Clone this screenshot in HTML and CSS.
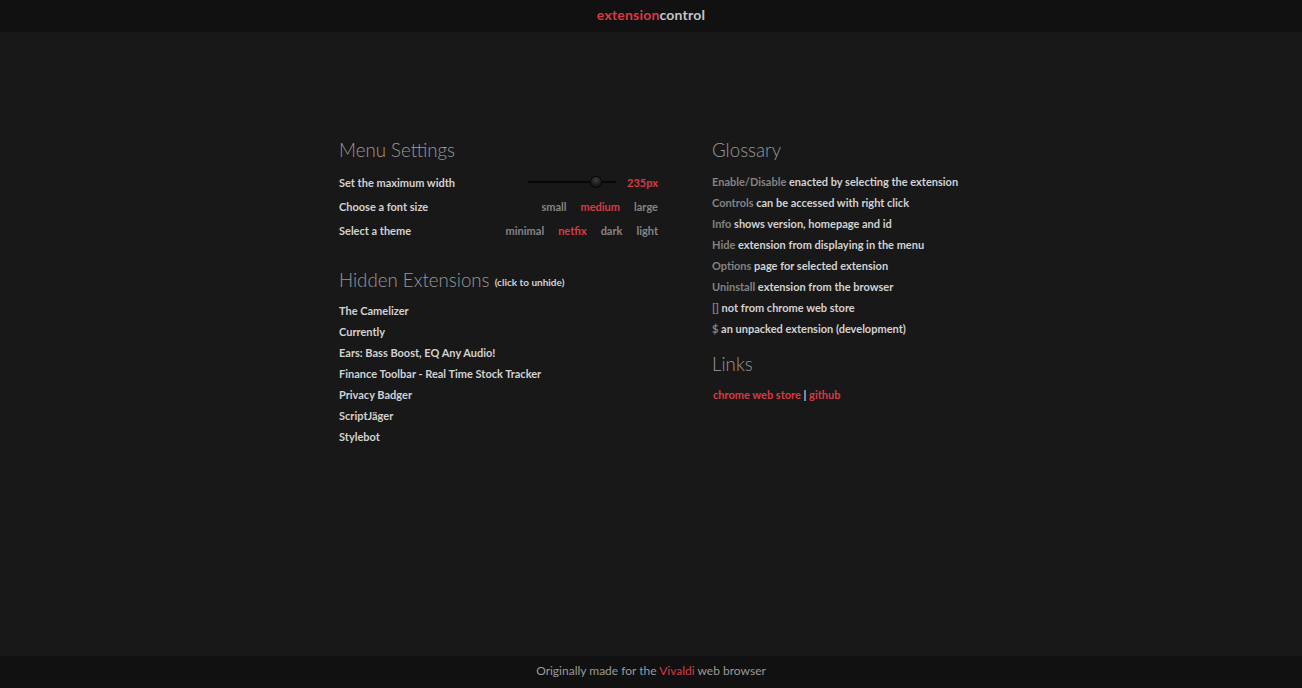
FILE: index.html
```html
<!DOCTYPE html>
<html>
<head>
<meta charset="utf-8">
<title>extensioncontrol</title>
<link rel="stylesheet" href="styles.css">
</head>
<body>
<div class="page">
  <header class="topbar">
    <span class="brand-red">extension</span><span class="brand-light">control</span>
  </header>
  <main class="main">
    <div class="columns">
      <section class="col col-left">
        <h2 class="heading">Menu Settings</h2>
        <div class="settings">
          <div class="setting-row">
            <span class="setting-label">Set the maximum width</span>
            <div class="setting-values">
              <div class="slider"><div class="track"></div><div class="thumb"></div></div>
              <span class="opt active">235px</span>
            </div>
          </div>
          <div class="setting-row">
            <span class="setting-label">Choose a font size</span>
            <div class="setting-values">
              <span class="opt">small</span>
              <span class="opt active">medium</span>
              <span class="opt">large</span>
            </div>
          </div>
          <div class="setting-row">
            <span class="setting-label">Select a theme</span>
            <div class="setting-values">
              <span class="opt">minimal</span>
              <span class="opt active">netfix</span>
              <span class="opt">dark</span>
              <span class="opt">light</span>
            </div>
          </div>
        </div>
        <h2 class="heading heading-hidden">Hidden Extensions <small class="hint">(click to unhide)</small></h2>
        <ul class="list">
          <li>The Camelizer</li>
          <li>Currently</li>
          <li>Ears: Bass Boost, EQ Any Audio!</li>
          <li>Finance Toolbar - Real Time Stock Tracker</li>
          <li>Privacy Badger</li>
          <li>ScriptJäger</li>
          <li>Stylebot</li>
        </ul>
      </section>
      <section class="col col-right">
        <h2 class="heading">Glossary</h2>
        <ul class="list glossary">
          <li><span class="term">Enable/Disable</span> enacted by selecting the extension</li>
          <li><span class="term">Controls</span> can be accessed with right click</li>
          <li><span class="term">Info</span> shows version, homepage and id</li>
          <li><span class="term">Hide</span> extension from displaying in the menu</li>
          <li><span class="term">Options</span> page for selected extension</li>
          <li><span class="term">Uninstall</span> extension from the browser</li>
          <li><span class="term">[]</span> not from chrome web store</li>
          <li><span class="term">$</span> an unpacked extension (development)</li>
        </ul>
        <h2 class="heading heading-links">Links</h2>
        <p class="links"><a class="link" href="#">chrome web store</a> | <a class="link" href="#">github</a></p>
      </section>
    </div>
  </main>
  <footer class="footer">
    <span class="footer-text">Originally made for the <span class="brand-red">Vivaldi</span> web browser</span>
  </footer>
</div>
</body>
</html>
```

FILE: styles.css
```css
html, body {
  margin: 0;
  padding: 0;
  background: #181818;
}
body {
  font-family: "Lato", "Open Sans", sans-serif;
  color: #d4d4d4;
}
.page {
  display: flex;
  flex-direction: column;
  height: 688px;
}
.topbar {
  height: 32px;
  background: #111111;
  display: flex;
  align-items: center;
  justify-content: center;
  font-size: 14px;
  font-weight: 700;
  letter-spacing: 0.2px;
  padding-bottom: 3px;
  box-sizing: border-box;
}
.brand-red { color: #d83a44; }
.brand-light { color: #c4c4c4; }
.main {
  flex: 1;
  padding-top: 106px;
}
.columns {
  display: flex;
  gap: 54px;
  padding-left: 339px;
}
.col {
  width: 319px;
}
.heading {
  margin: 0;
  font-size: 18.7px;
  line-height: 24px;
  font-weight: 300;
  color: #989898;
}
.settings {
  margin-top: 8px;
}
.setting-row {
  display: flex;
  justify-content: space-between;
  align-items: center;
  height: 24px;
  font-size: 11px;
  font-weight: 700;
}
.setting-label { color: #d2d2d2; }
.setting-values {
  display: flex;
  align-items: center;
  gap: 14px;
}
.opt { color: #858585; }
.opt.active { color: #d83a44; }
.slider {
  position: relative;
  width: 88px;
  height: 12px;
  margin-right: -3px;
}
.track {
  position: absolute;
  left: 0;
  right: 0;
  top: 5px;
  height: 2px;
  background: #070707;
}
.thumb {
  position: absolute;
  left: 63px;
  top: 1px;
  width: 10px;
  height: 10px;
  border-radius: 50%;
  background: radial-gradient(circle at 50% 30%, #3c3c3c, #141414 75%);
  box-shadow: 0 0 0 1px #070707;
}
.heading-hidden {
  margin-top: 26px;
}
.hint {
  font-size: 10px;
  line-height: 1;
  font-weight: 700;
  color: #d2d2d2;
  position: relative;
  top: -1px;
}
.list {
  list-style: none;
  margin: 8px 0 0 0;
  padding: 0;
}
.list li {
  font-size: 11px;
  font-weight: 700;
  line-height: 21px;
  color: #d2d2d2;
}
.glossary {
  margin-top: 9px;
}
.glossary .term {
  color: #838383;
}
.heading-links {
  margin-top: 13px;
}
.links {
  margin: 8px 0 0 1px;
  font-size: 11px;
  font-weight: 700;
  line-height: 21px;
  color: #d2d2d2;
}
.link {
  color: #d83a44;
  text-decoration: none;
}
.footer {
  height: 32px;
  background: #111111;
  display: flex;
  align-items: center;
  justify-content: center;
  padding-bottom: 3px;
  box-sizing: border-box;
}
.footer-text {
  font-size: 12px;
  font-weight: 400;
  color: #9a9a9a;
}
```
